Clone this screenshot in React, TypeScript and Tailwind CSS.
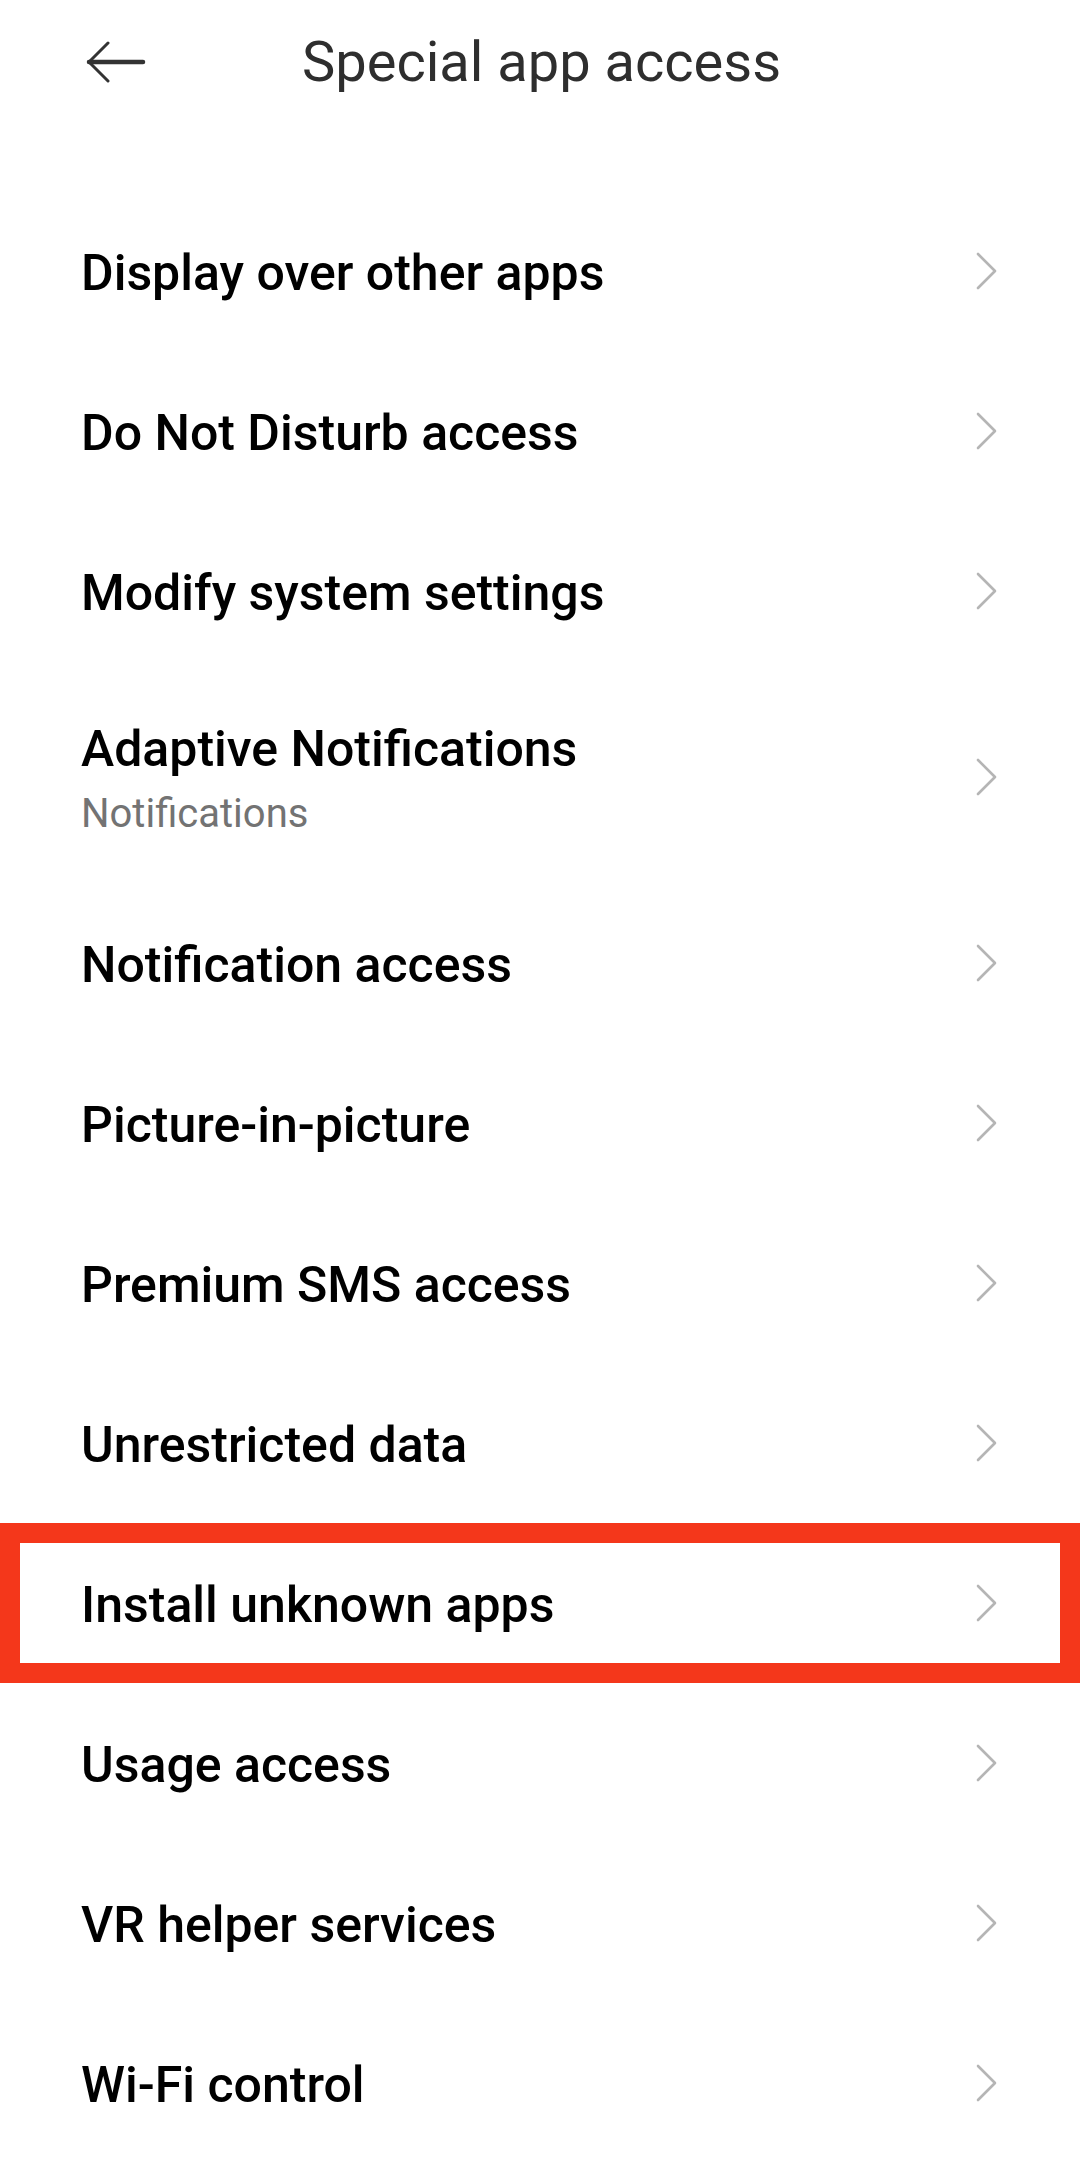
import React from "react";

interface Item {
  title: string;
  subtitle?: string;
  highlighted?: boolean;
}

const items: Item[] = [
  { title: "Display over other apps" },
  { title: "Do Not Disturb access" },
  { title: "Modify system settings" },
  { title: "Adaptive Notifications", subtitle: "Notifications" },
  { title: "Notification access" },
  { title: "Picture-in-picture" },
  { title: "Premium SMS access" },
  { title: "Unrestricted data" },
  { title: "Install unknown apps", highlighted: true },
  { title: "Usage access" },
  { title: "VR helper services" },
  { title: "Wi-Fi control" },
];

function Chevron() {
  return (
    <svg width="22" height="38" viewBox="0 0 22 38" fill="none">
      <path d="M2 2 L19 19 L2 36" stroke="#b5b5b5" strokeWidth="2.6" strokeLinecap="round" strokeLinejoin="round" />
    </svg>
  );
}

function BackArrow() {
  return (
    <svg width="60" height="42" viewBox="0 0 60 42" fill="none">
      <path d="M3 21 H57" stroke="#333333" strokeWidth="4.5" strokeLinecap="round" />
      <path d="M22 2 L3 21 L22 40" stroke="#333333" strokeWidth="3" strokeLinecap="round" strokeLinejoin="round" />
    </svg>
  );
}

export default function App() {
  return (
    <div className="min-h-screen w-full bg-white font-['Roboto',sans-serif]">
      {/* header */}
      <div className="flex h-[124px] items-center">
        <div className="ml-[86px] flex items-center">
          <BackArrow />
        </div>
        <h1 className="ml-[156px] text-[56px] leading-none font-normal text-[#2e2e2e]">
          Special app access
        </h1>
      </div>

      <div className="mt-[67px]">
        {items.map((item) => (
          <div
            key={item.title}
            className={`relative flex items-center justify-between pl-[81px] pr-[82px] ${
              item.subtitle ? "h-[212px]" : "h-[160px]"
            }`}
          >
            <div className="flex flex-col pt-[3px]">
              <span className="text-[50px] leading-none font-medium text-black">{item.title}</span>
              {item.subtitle && (
                <span className="mt-5 text-[40px] leading-none font-normal text-[#737373]">
                  {item.subtitle}
                </span>
              )}
            </div>
            <Chevron />
            {item.highlighted && (
              <div className="pointer-events-none absolute inset-0 border-[20px] border-[#f4371b]" />
            )}
          </div>
        ))}
      </div>
    </div>
  );
}
